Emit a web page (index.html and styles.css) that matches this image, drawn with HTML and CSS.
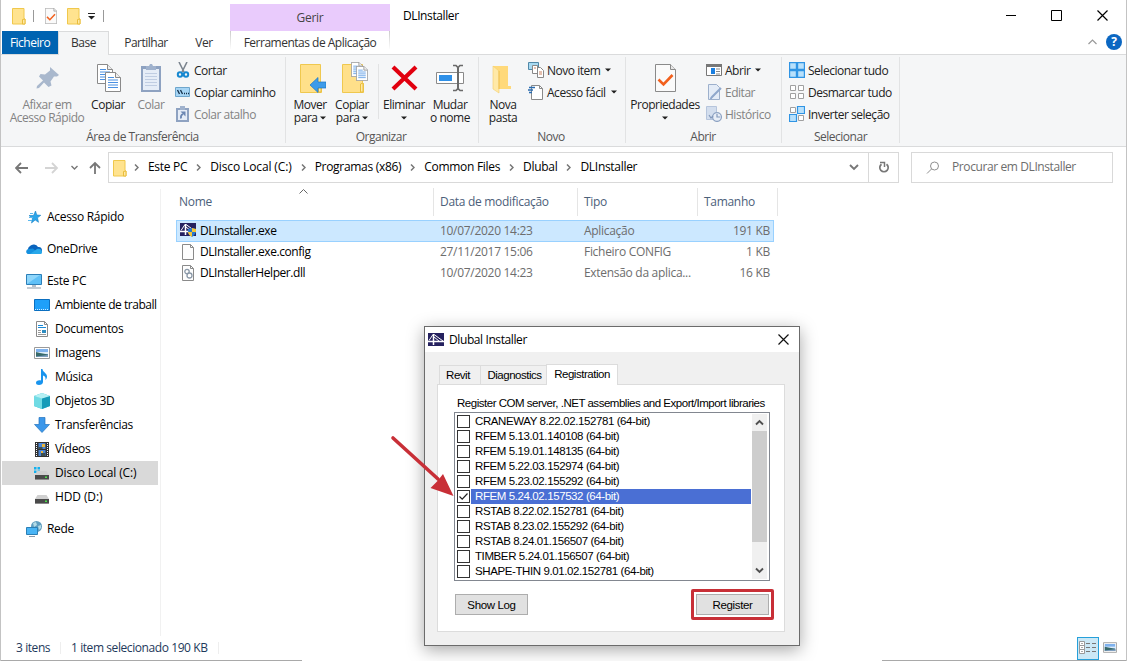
FILE: index.html
```html
<!DOCTYPE html>
<html lang="pt">

<head>
    <meta charset="UTF-8">
    <meta name="viewport" content="width=device-width, initial-scale=1.0">
    <title>DLInstaller</title>
    <link rel="stylesheet" href="styles.css">
</head>

<body>
    <!-- shared icons -->
    <svg class="defs">
        <symbol id="folder" viewBox="0 0 14 18">
            <path d="M.5 1.500h11.500v10l1 .5v5H.5z" fill="#ffe38f" stroke="#f0c84c"/>
            <path d="M10.500 17v-4.500l2.500-.5v5z" fill="#ffe9a6" stroke="#e9bd3c"/>
        </symbol>
        <symbol id="bigfolder" viewBox="0 0 22 29">
            <path d="M.5.5h20v18l1 1v9H.5z" fill="#ffe08a" stroke="#efc84f"/>
            <path d="M18.500 28V20l2.500-1v9z" fill="#ffe9a6" stroke="#e9bd3c"/>
        </symbol>
        <symbol id="page" viewBox="0 0 16 20">
            <path d="M.5.5h10l5 5v14H.5z" fill="#fff" stroke="#8a8a8a"/>
            <path d="M10.500.5v5h5" fill="#eee" stroke="#8a8a8a"/>
            <path d="M3 5.500h6M3 8h10M3 10.500h10M3 13h10M3 15.500h10" stroke="#4a90e2" stroke-width="1"/>
        </symbol>
        <symbol id="checkpage" viewBox="0 0 21 28">
            <path d="M.5.5h15l5 5v22H.5z" fill="#fafafa" stroke="#8a8a8a"/>
            <path d="M15.500.5v5h5" fill="#e6e6e6" stroke="#8a8a8a"/>
            <path d="M3.500 15.500l5 5L17.500 11" fill="none" stroke="#f2601d" stroke-width="2.600"/>
        </symbol>
        <symbol id="caret" viewBox="0 0 6 4"><path d="M0 .5h6L3 3.500z" fill="#1e1e1e"/></symbol>
        <symbol id="crumb" viewBox="0 0 5 7"><path d="M1 .5l3 3-3 3" fill="none" stroke="#777" stroke-width="1.500"/></symbol>
        <symbol id="bridge" viewBox="0 0 16 13">
            <path d="M0 0h16v13H0z" fill="#25215f"/>
            <path d="M0 8.500h16" stroke="#fff" stroke-width="1.500"/>
            <path d="M5.500 1v11" stroke="#fff" stroke-width="1.500"/>
            <path d="M5 1.500L1 7.500M6 1.500l9 6.500M6 4l5 4" fill="none" stroke="#fff"/>
        </symbol>
        <symbol id="picture" viewBox="0 0 16 12">
            <path d="M.5.5h15v11H.5z" fill="#fff" stroke="#9a9a9a"/>
            <path d="M2 2h12v8H2z" fill="#7fb2ee"/>
            <path d="M2 5h12v2H2z" fill="#dcebf8"/>
            <path d="M2 5l4 1 8 1.500V10H2z" fill="#386a6b"/>
            <path d="M2 9.500l12-1.500v2H2z" fill="#7f9fc0"/>
        </symbol>
        <symbol id="drive" viewBox="0 0 14 9">
            <path d="M2.500 0h9L14 4H0z" fill="#d0d0d0"/>
            <path d="M0 4h14v4.500H0z" fill="#4a4a4a"/>
            <path d="M0 8h14v1H0z" fill="#8b8b8b"/>
            <path d="M10 5.500h2v1.500h-2z" fill="#4be04b"/>
        </symbol>
    </svg>

    <div class="window">
        <header class="titlebar">
            <div class="quick">
                <svg class="q-folder" width="14" height="18"><use href="#folder"/></svg>
                <span class="q-sep"></span>
                <svg class="q-check" width="12" height="16"><use href="#checkpage"/></svg>
                <svg class="q-folder2" width="14" height="18"><use href="#folder"/></svg>
                <svg class="q-caret" width="7" height="7" viewBox="0 0 7 7"><path d="M0 .5h7" stroke="#222"/><path d="M0 3h7L3.500 6.500z" fill="#222"/></svg>
                <span class="q-sep"></span>
            </div>
            <div class="context">Gerir</div>
            <div class="title">DLInstaller</div>
            <svg class="controls" width="102" height="12" viewBox="0 0 102 12" fill="none" stroke="#000">
                <path d="M0 5.500h10M45.500.5h10v10h-10z"/>
                <path d="M91.500.500l10 10M101.500.500l-10 10" stroke-width="1.200"/>
            </svg>
        </header>

        <nav class="tabs">
            <div class="tab file">Ficheiro</div>
            <div class="tab active">Base</div>
            <div class="tab share">Partilhar</div>
            <div class="tab view">Ver</div>
            <div class="tab tools">Ferramentas de Aplicação</div>
            <svg class="collapse" width="9" height="6" viewBox="0 0 9 6"><path d="M.5 5l4-4 4 4" fill="none" stroke="#999" stroke-width="1.200"/></svg>
            <div class="help">?</div>
        </nav>

        <section class="ribbon">
            <div class="group clipboard">
                <div class="tools-row">
                    <div class="big pin off">
                        <svg width="32" height="32" viewBox="0 0 32 32"><path d="M19 5l9 8-2 1.500-3 0-3.500 5 1 4-3 1.500-4.500-4.500L8 26l-2.500.5.5-2.500 6-5.500-4-4 1.500-2.500 4.500.5L19 8.500z" fill="#a9b8cd"/></svg>
                        <span>Afixar em<br>Acesso Rápido</span>
                    </div>
                    <div class="big copy">
                        <svg width="32" height="32"><use href="#page" x="5" y="2" width="16" height="20"/><use href="#page" x="13" y="10" width="16" height="20"/></svg>
                        <span>Copiar</span>
                    </div>
                    <div class="big paste off">
                        <svg width="32" height="32" viewBox="0 0 32 32">
                            <path d="M6 4h20v26H6z" fill="#8ea2c1"/><path d="M8 7h16v21H8z" fill="#e6edf7"/>
                            <path d="M11 4h3l1-2h2l1 2h3v4H11z" fill="#a0b2cd"/>
                            <path d="M10 11.500h12M10 14.500h12M10 17.500h12M10 20.500h12M10 23.500h12" stroke="#c0cde2"/>
                        </svg>
                        <span>Colar</span>
                    </div>
                    <div class="small-list">
                        <div class="small">
                            <svg width="16" height="16" viewBox="0 0 16 16"><path d="M4 0l5 10M12 0L7 10" stroke="#7c858f" stroke-width="1.600"/><g fill="none" stroke="#1788d0" stroke-width="2"><circle cx="5" cy="12.500" r="2.200"/><circle cx="11" cy="12.500" r="2.200"/></g></svg>
                            Cortar
                        </div>
                        <div class="small">
                            <svg width="16" height="16" viewBox="0 0 16 16"><path d="M.5 3.500h14v9H.5z" fill="#a6d5f5" stroke="#6fa6cc"/><path d="M2.500 6l2 4M5.500 6l2 4M9 9.500h1M11 9.500h1M13 9.500h1" stroke="#14304a" stroke-width="1.300"/></svg>
                            Copiar caminho
                        </div>
                        <div class="small off">
                            <svg width="16" height="16" viewBox="0 0 16 16"><path d="M1 2h13v14H1z" fill="#8ea2c1"/><path d="M3 4h9v10H3z" fill="#e6edf7"/><path d="M5 0h5v4H5z" fill="#a0b2cd"/><path d="M6 12.500c-.5-3 .5-4 2-4.500" fill="none" stroke="#6d88b3" stroke-width="1.800"/><path d="M5.500 5.500h5v5z" fill="#6d88b3"/></svg>
                            Colar atalho
                        </div>
                    </div>
                </div>
                <div class="group-name">Área de Transferência</div>
            </div>

            <div class="group organize">
                <div class="tools-row">
                    <div class="big">
                        <svg width="32" height="32"><use href="#bigfolder" x="6" y="2" width="22" height="29"/><path d="M16 23l8-7.500v4.500h8v6h-8v4.500z" fill="#3d9be9" stroke="#1b76c4" stroke-width=".7"/></svg>
                        <span>Mover<br>para <svg class="caret"><use href="#caret"/></svg></span>
                    </div>
                    <div class="big">
                        <svg width="32" height="32"><use href="#bigfolder" x="6" y="2" width="22" height="29"/><use href="#page" x="15" y="0" width="12" height="15"/><use href="#page" x="20" y="4" width="12" height="15"/></svg>
                        <span>Copiar<br>para <svg class="caret"><use href="#caret"/></svg></span>
                    </div>
                    <div class="inner-sep"></div>
                    <div class="big delete">
                        <svg width="32" height="32" viewBox="0 0 32 32"><path d="M5 5l23 22M28 5L5 27" stroke="#e1000f" stroke-width="4.200"/></svg>
                        <span>Eliminar<br><svg class="caret"><use href="#caret"/></svg></span>
                    </div>
                    <div class="big">
                        <svg width="32" height="32" viewBox="0 0 32 32"><path d="M2.500 10.500h27v11h-27z" fill="#fff" stroke="#8a8a8a"/><path d="M5 13h13v6H5z" fill="#2e90e8"/><path d="M24 5v23" stroke="#6a6a6a" stroke-width="2"/><path d="M19 3.500h3l2 2 2-2h3M19 28.500h3l2-2 2 2h3" fill="none" stroke="#6a6a6a" stroke-width="1.700"/></svg>
                        <span>Mudar<br>o nome</span>
                    </div>
                </div>
                <div class="group-name">Organizar</div>
            </div>

            <div class="group new">
                <div class="tools-row">
                    <div class="big">
                        <svg width="32" height="32" viewBox="0 0 32 32"><path d="M6 4h15v20h3v3H11z" fill="#ffd97a"/><path d="M6 4l6 5v22l-6-4z" fill="#ffe9a8" stroke="#f3cf6a" stroke-width=".6"/><path d="M12 9v18" stroke="#efc251"/></svg>
                        <span>Nova<br>pasta</span>
                    </div>
                    <div class="small-list">
                        <div class="small">
                            <svg width="16" height="16" viewBox="0 0 16 16"><path d="M.5.5h10v7H.5z" fill="#a8daf2" stroke="#5088a8"/><path d="M4.500 3.500h5v8h-5zM9.500 5.500h3l3 3v7h-6z" fill="#fff" stroke="#888"/><path d="M11 10h3M11 12h3M6 6h2" stroke="#c9805f"/></svg>
                            Novo item <svg class="caret"><use href="#caret"/></svg>
                        </div>
                        <div class="small">
                            <svg width="16" height="16" viewBox="0 0 16 16"><path d="M3.500 1.500h8l3 3v11h-11z" fill="#fff" stroke="#8a8a8a"/><path d="M11.500 1.500v3h3" fill="none" stroke="#8a8a8a"/><path d="M1 3.500h6M0 6h5M1 8.500h3" stroke="#2b6cb0" stroke-width="1.300"/></svg>
                            Acesso fácil <svg class="caret"><use href="#caret"/></svg>
                        </div>
                    </div>
                </div>
                <div class="group-name">Novo</div>
            </div>

            <div class="group open">
                <div class="tools-row">
                    <div class="big props">
                        <svg width="32" height="32"><use href="#checkpage" x="6" y="2" width="21" height="28"/></svg>
                        <span>Propriedades<br><svg class="caret"><use href="#caret"/></svg></span>
                    </div>
                    <div class="small-list">
                        <div class="small">
                            <svg width="16" height="16" viewBox="0 0 16 16"><path d="M.5 2.500h15v11H.5z" fill="#fff" stroke="#777"/><path d="M0 2h16v3H0z" fill="#777"/><path d="M5 6h4v6H5z" fill="#1a7fe0"/><path d="M10 7h4M10 9.500h4M10 12h4" stroke="#888"/></svg>
                            Abrir <svg class="caret"><use href="#caret"/></svg>
                        </div>
                        <div class="small off">
                            <svg width="16" height="16" viewBox="0 0 16 16"><path d="M2.500.5h8l3 3v12h-11z" fill="#e4ecf7" stroke="#9db0cc"/><path d="M15 4l-9 9-1.500 2" stroke="#90a8cc" stroke-width="2"/></svg>
                            Editar
                        </div>
                        <div class="small off">
                            <svg width="16" height="16" viewBox="0 0 16 16"><path d="M.5.5h10v13H.5z" fill="#d3deee" stroke="#b6c5dc"/><circle cx="11" cy="11" r="4.400" fill="#e8eef7" stroke="#8fa4c4" stroke-width="1.300"/><path d="M11 8v3h3M3 9l2 3 2-2" fill="none" stroke="#8399bb" stroke-width="1.200"/></svg>
                            Histórico
                        </div>
                    </div>
                </div>
                <div class="group-name">Abrir</div>
            </div>

            <div class="group select">
                <div class="tools-row">
                    <div class="small-list">
                        <div class="small">
                            <svg width="16" height="16" viewBox="0 0 16 16" fill="#b8e0fb" stroke="#2f94e4"><path d="M.5.5h7v7h-7zM8.500.5h7v7h-7zM.5 8.500h7v7h-7zM8.500 8.500h7v7h-7z" stroke-width="1.400"/></svg>
                            Selecionar tudo
                        </div>
                        <div class="small">
                            <svg width="16" height="16" viewBox="0 0 16 16" fill="#fff" stroke="#a0a0a0"><path d="M1.500 1.500h5v5h-5zM9.500 1.500h5v5h-5zM1.500 9.500h5v5h-5zM9.500 9.500h5v5h-5z"/></svg>
                            Desmarcar tudo
                        </div>
                        <div class="small">
                            <svg width="16" height="16" viewBox="0 0 16 16" fill="#fff" stroke="#a0a0a0"><path d="M1.500 1.500h5v5h-5zM9.500 9.500h5v5h-5z"/><path d="M8.500.5h7v7h-7zM.5 8.500h7v7h-7z" fill="#b8e0fb" stroke="#2f94e4" stroke-width="1.200"/></svg>
                            Inverter seleção
                        </div>
                    </div>
                </div>
                <div class="group-name">Selecionar</div>
            </div>
        </section>

        <div class="address-row">
            <svg class="nav-arrows" width="88" height="14" viewBox="0 0 88 14" fill="none">
                <path d="M1 7h12M6 2L1 7l5 5" stroke="#777" stroke-width="1.800"/>
                <path d="M30 7h12M37 2l5 5-5 5" stroke="#d4d4d4" stroke-width="1.800"/>
                <path d="M56.500 5l3 3 3-3" stroke="#777" stroke-width="1.400"/>
                <path d="M80 13V2M75 7l5-5 5 5" stroke="#777" stroke-width="1.800"/>
            </svg>
            <div class="address">
                <svg class="addr-folder" width="14" height="18"><use href="#folder"/></svg>
                <svg class="sep"><use href="#crumb"/></svg><span>Este PC</span>
                <svg class="sep"><use href="#crumb"/></svg><span class="disk">Disco Local (C:)</span>
                <svg class="sep"><use href="#crumb"/></svg><span>Programas (x86)</span>
                <svg class="sep"><use href="#crumb"/></svg><span>Common Files</span>
                <svg class="sep"><use href="#crumb"/></svg><span>Dlubal</span>
                <svg class="sep"><use href="#crumb"/></svg><span>DLInstaller</span>
                <svg class="drop" width="10" height="7" viewBox="0 0 10 7"><path d="M1 1l4 4 4-4" fill="none" stroke="#777" stroke-width="1.900"/></svg>
                <div class="reload">
                    <svg width="12" height="13" viewBox="0 0 12 13"><path d="M3.500 3.200A4.200 4.200 0 1 0 8.500 3.200" fill="none" stroke="#777" stroke-width="1.700"/><path d="M2 1.500h4.500v4.500" fill="none" stroke="#777" stroke-width="1.500"/></svg>
                </div>
            </div>
            <div class="search">
                <svg width="14" height="14" viewBox="0 0 14 14" fill="none" stroke="#8f8f8f"><circle cx="8.500" cy="5" r="4"/><path d="M5.500 8L1 12.500"/></svg>
                <span>Procurar em DLInstaller</span>
            </div>
        </div>

        <main class="content">
            <aside class="sidebar">
                <div class="item">
                    <svg width="16" height="16" viewBox="0 0 16 16"><path d="M9.500 2l1.300 4 4 .3-3.300 2.500 1 4.500-3.300-2.300L5.500 14l1-4.500L3 6.500h4.500z" fill="#2aa5ea" stroke="#1780c4" stroke-width=".6"/><path d="M4 4.500h3M3 8.500h4M2 11.500h4" stroke="#5ab8ee"/></svg>
                    Acesso Rápido
                </div>
                <div class="item top">
                    <svg width="16" height="16" viewBox="0 0 16 16"><path d="M2 9a4 4 0 0 1 2-4 5 5 0 0 1 8 1 3.500 3.500 0 0 1 1 7H3a3 3 0 0 1-1-4z" fill="#0a64bd"/><path d="M2 13c-3-1-2-5 1-5l4-.5 6 5.500z" fill="#1490df"/><path d="M4 13l7-5c3-1 5 1 5 3s-1 2-2 2z" fill="#28a8ea"/></svg>
                    OneDrive
                </div>
                <div class="item top">
                    <svg width="16" height="16" viewBox="0 0 16 16"><path d="M.5 1.500h15v10H.5z" fill="#5fc0f7" stroke="#2c7fb8"/><path d="M1 11L14 2H1z" fill="#8ed6fb"/><path d="M6 12h4v2H6z" fill="#b4c0ca"/><path d="M1 15h14" stroke="#8a99a8"/></svg>
                    Este PC
                </div>
                <div class="item sub desktop">
                    <svg width="16" height="16" viewBox="0 0 16 16"><path d="M.5 2.500h15v11H.5z" fill="#1ea0fa" stroke="#0b6fc0"/><path d="M1 12.500h14" stroke="#d5ecff" stroke-dasharray="1 1"/></svg>
                    Ambiente de traball
                </div>
                <div class="item sub">
                    <svg width="16" height="16" viewBox="0 0 16 16"><path d="M2.500.5h8l3 3v12h-11z" fill="#fff" stroke="#8a8a8a"/><path d="M10.500.5v3h3" fill="none" stroke="#8a8a8a"/><path d="M4 4.500h5M4 6.500h8" stroke="#198ad8"/><path d="M4 9.500h3M4 11.500h3M4 13.500h8" stroke="#999"/><path d="M8 9h4v3H8z" fill="#2c8bc0"/></svg>
                    Documentos
                </div>
                <div class="item sub">
                    <svg width="16" height="12"><use href="#picture"/></svg>
                    Imagens
                </div>
                <div class="item sub">
                    <svg width="16" height="16" viewBox="0 0 16 16"><path d="M7 0h1.500c0 3 4.500 4 4.500 7.500 0 2-1 3-1.500 3.500.5-3-1-4-2.500-4.500V13c0 2-2 3-4 3s-3-1-3-2.300C2 12 4 11 7 11.500z" fill="#1894ee"/></svg>
                    Música
                </div>
                <div class="item sub">
                    <svg width="16" height="16" viewBox="0 0 16 16"><path d="M8 0l8 3v10l-8 3-8-3V3z" fill="#3cc0d6"/><path d="M8 5l8-2v10l-8 3z" fill="#159bb8"/><path d="M0 3l8 2v11l-8-3z" fill="#70dbe4"/><path d="M0 3l8-3 8 3-8 2.500z" fill="#b5f0f3"/></svg>
                    Objetos 3D
                </div>
                <div class="item sub">
                    <svg width="16" height="16" viewBox="0 0 16 16"><path d="M5 .5h6v7h4.500L8 15.500.5 7.500H5z" fill="#3b97ea" stroke="#2272bd" stroke-width=".7"/></svg>
                    Transferências
                </div>
                <div class="item sub">
                    <svg width="16" height="16" viewBox="0 0 16 16"><path d="M1 1h14v15H1z" fill="#333"/><path d="M2.500 2v14M13.500 2v14" stroke="#fff" stroke-dasharray="1 1"/><path d="M4.500 2h7v6h-7zM4.500 9h7v6h-7z" fill="#4b86d6"/><path d="M4.500 6h4V8h-4zM7 12h4v3H7z" fill="#3c4f52"/><path d="M8 3h3v3H8zM7 10h2v2H7z" fill="#e9b53b"/></svg>
                    Vídeos
                </div>
                <div class="item sub selected disk">
                    <svg width="16" height="16" viewBox="0 0 16 16"><path d="M0 2h2.500v2.500H0zM3.500 2H6v2.500H3.500zM0 5.500h2.500V8H0zM3.500 5.500H6V8H3.500z" fill="#12b1ef"/><use href="#drive" x="1" y="6" width="14" height="9"/></svg>
                    Disco Local (C:)
                </div>
                <div class="item sub disk">
                    <svg width="16" height="16"><use href="#drive" x="1" y="6" width="14" height="9"/></svg>
                    HDD (D:)
                </div>
                <div class="item top">
                    <svg width="16" height="16" viewBox="0 0 16 16"><circle cx="10.500" cy="5.500" r="5.500" fill="#5f9dbf"/><path d="M7 2l3-1 1 3-3 2zM12 5l3-1v3l-2 2z" fill="#b5dbe6"/><path d="M.5 6.500h11v7H.5z" fill="#48b4f5" stroke="#2b7fb5"/><path d="M3 15.500h6" stroke="#8a99a8"/></svg>
                    Rede
                </div>
            </aside>

            <section class="files">
                <div class="columns">
                    <div class="col name">Nome<svg class="sort" width="9" height="5" viewBox="0 0 9 5"><path d="M.5 4.500l4-4 4 4" fill="none" stroke="#666"/></svg></div>
                    <div class="col">Data de modificação</div>
                    <div class="col">Tipo</div>
                    <div class="col">Tamanho</div>
                </div>
                <div class="file-row chosen">
                    <div class="fname">
                        <svg width="16" height="14" viewBox="0 0 16 14"><use href="#bridge" width="16" height="13"/><path d="M8 6l4-1 4 1c0 4-1 6-4 8-3-2-4-4-4-8z" fill="#2878d0"/><path d="M12 5l4 1v3h-4zM8 9h4v5c-2-1-4-3-4-5z" fill="#f6c637"/></svg>
                        DLInstaller.exe
                    </div>
                    <div>10/07/2020 14:23</div><div>Aplicação</div><div class="size">191 KB</div>
                </div>
                <div class="file-row">
                    <div class="fname">
                        <svg width="16" height="16" viewBox="0 0 16 16"><path d="M2.500.5h8l3 3v12h-11z" fill="#fdfdfd" stroke="#8a8a8a"/><path d="M10.500.5v3h3" fill="none" stroke="#8a8a8a"/></svg>
                        DLInstaller.exe.config
                    </div>
                    <div>27/11/2017 15:06</div><div>Ficheiro CONFIG</div><div class="size">1 KB</div>
                </div>
                <div class="file-row">
                    <div class="fname">
                        <svg width="16" height="16" viewBox="0 0 16 16"><path d="M2.500.5h8l3 3v12h-11z" fill="#fdfdfd" stroke="#8a8a8a"/><path d="M10.500.5v3h3" fill="none" stroke="#8a8a8a"/><g fill="#fff" stroke="#8b99a8" stroke-width="1.300"><circle cx="7" cy="6.500" r="2.200"/><circle cx="9.500" cy="10.500" r="2.500"/></g></svg>
                        DLInstallerHelper.dll
                    </div>
                    <div>10/07/2020 14:23</div><div>Extensão da aplica...</div><div class="size">16 KB</div>
                </div>
            </section>
        </main>

        <footer class="status">
            <span class="count">3 itens</span>
            <span class="picked">1 item selecionado 190 KB</span>
            <div class="view-details">
                <svg width="18" height="14" viewBox="0 0 18 14"><path d="M.5.5h5v4h-5zM.5 4.500h5v4h-5zM.5 8.500h5v4h-5z" fill="#fff" stroke="#999"/><path d="M2.500 2.500h1M2.500 6.500h1M2.500 10.500h1" stroke="#555"/><path d="M7 2.500h4M13 2.500h4M7 6.500h4M13 6.500h4M7 10.500h4M13 10.500h4" stroke="#777"/></svg>
            </div>
            <svg class="view-icons" width="14" height="11"><use href="#picture"/></svg>
        </footer>
    </div>

    <div class="dialog">
        <div class="dialog-title">
            <svg width="16" height="13"><use href="#bridge"/></svg>
            <span>Dlubal Installer</span>
            <svg class="dialog-close" width="11" height="11" viewBox="0 0 11 11"><path d="M.5.5l10 10M10.500.5l-10 10" stroke="#111" stroke-width="1.200"/></svg>
        </div>
        <div class="dialog-tabs">
            <div class="dtab revit">Revit</div>
            <div class="dtab diag">Diagnostics</div>
            <div class="dtab reg">Registration</div>
        </div>
        <div class="panel">
            <div class="hint">Register COM server, .NET assemblies and Export/Import libraries</div>
            <div class="listbox">
                <div class="options">
                    <div class="option"><i></i><span>CRANEWAY 8.22.02.152781 (64-bit)</span></div>
                    <div class="option"><i></i><span>RFEM 5.13.01.140108 (64-bit)</span></div>
                    <div class="option"><i></i><span>RFEM 5.19.01.148135 (64-bit)</span></div>
                    <div class="option"><i></i><span>RFEM 5.22.03.152974 (64-bit)</span></div>
                    <div class="option"><i></i><span>RFEM 5.23.02.155292 (64-bit)</span></div>
                    <div class="option on"><i><svg width="11" height="11" viewBox="0 0 11 11"><path d="M1.500 5.500l2.700 2.700L9.500 2.500" fill="none" stroke="#222" stroke-width="1.200"/></svg></i><span>RFEM 5.24.02.157532 (64-bit)</span></div>
                    <div class="option"><i></i><span>RSTAB 8.22.02.152781 (64-bit)</span></div>
                    <div class="option"><i></i><span>RSTAB 8.23.02.155292 (64-bit)</span></div>
                    <div class="option"><i></i><span>RSTAB 8.24.01.156507 (64-bit)</span></div>
                    <div class="option"><i></i><span>TIMBER 5.24.01.156507 (64-bit)</span></div>
                    <div class="option"><i></i><span>SHAPE-THIN 9.01.02.152781 (64-bit)</span></div>
                </div>
                <div class="scrollbar">
                    <svg width="9" height="7" viewBox="0 0 9 7"><path d="M1 5.500L4.500 2 8 5.500" fill="none" stroke="#505050" stroke-width="1.900"/></svg>
                    <div class="thumb"></div>
                    <svg class="down" width="9" height="7" viewBox="0 0 9 7"><path d="M1 1.500L4.500 5 8 1.500" fill="none" stroke="#505050" stroke-width="1.900"/></svg>
                </div>
            </div>
            <div class="buttons">
                <div class="btn">Show Log</div>
                <div class="marked"><div class="btn">Register</div></div>
            </div>
        </div>
    </div>

    <!-- arrow pointing at the checked version -->
    <svg class="pointer" width="68" height="64" viewBox="0 0 68 64"><path d="M3 3l45 41" stroke="#c82f37" stroke-width="3.600" stroke-linecap="round"/><path d="M63.500 61L40.500 53l6.500-6.500.5-.5L53 39z" fill="#c82f37"/></svg>
</body>

</html>
```
FILE: styles.css
```css
body {
    margin: 0;
    background-color: #fff;
    font-family: "Open Sans", "Noto Sans", sans-serif;
    font-size: 12px;
    letter-spacing: -0.3px;
    color: #000;
    overflow: hidden;
}

svg {
    display: block;
    flex: none;
}

.defs {
    display: none;
}

.window {
    position: relative;
    display: flex;
    flex-direction: column;
    box-sizing: border-box;
    width: 1127px;
    height: 661px;
    border-left: 1px solid #c3c3c3;
    border-right: 1px solid #c3c3c3;
    background:
        linear-gradient(#a9a9a9, #a9a9a9) 0 100% / 301px 1px no-repeat,
        linear-gradient(#a9a9a9, #a9a9a9) 100% 100% / 244px 1px no-repeat,
        #fff;
}

/* title bar */
.titlebar {
    display: flex;
    align-items: flex-start;
    height: 31px;
}

.quick {
    display: flex;
    align-items: center;
    width: 229px;
    height: 31px;
}

.q-folder {
    margin: 0 7px 0 11px;
}

.q-sep {
    width: 1px;
    height: 12px;
    background-color: #999;
}

.q-check {
    margin: 0 10px 0 11px;
}

.q-caret {
    margin: 2px 8px 0 7px;
}

.context {
    width: 160px;
    height: 27px;
    margin-top: 4px;
    line-height: 28px;
    text-align: center;
    background-color: #e9cbfc;
    color: #444;
}

.title {
    flex: 1;
    margin-left: 13px;
    line-height: 31px;
    letter-spacing: -0.4px;
}

.controls {
    margin: 10px 18.5px 0 0;
}

/* ribbon tabs */
.tabs {
    display: flex;
    height: 24px;
    margin-bottom: -1px;
    line-height: 24px;
    position: relative;
    color: #333;
}

.tab {
    box-sizing: border-box;
    text-align: center;
    letter-spacing: -0.5px;
    white-space: nowrap;
}

.file {
    width: 56px;
    height: 23px;
    margin-left: 1px;
    background-color: #0063b1;
    color: #fff;
}

.active {
    width: 51px;
    border: 1px solid #dadbdc;
    border-bottom: none;
    line-height: 22px;
    background-color: #f5f6f7;
}

.share {
    width: 74px;
}

.view {
    width: 42px;
}

.tools {
    width: 160px;
    margin-left: 5px;
    height: 18px;
    border-left: 1px solid;
    border-right: 1px solid;
    border-image: linear-gradient(#c8c8c8, #fff) 1;
}

.collapse {
    margin: 8px 9px 0 auto;
}

.help {
    width: 16px;
    height: 16px;
    margin: 3px 4px 0 0;
    border-radius: 8px;
    background-color: #0b67c2;
    color: #fff;
    font-weight: bold;
    line-height: 16px;
    text-align: center;
}

/* ribbon */
.ribbon {
    display: flex;
    height: 91px;
    border-top: 1px solid #dadbdc;
    border-bottom: 1px solid #dadbdc;
    background-color: #f5f6f7;
    color: #222;
    letter-spacing: -0.48px;
}

.group {
    position: relative;
    display: flex;
    flex-direction: column;
    box-sizing: border-box;
    height: 86px;
    margin-top: 2px;
    border-right: 1px solid #e2e3e4;
}

.clipboard {
    width: 285px;
    padding-left: 4px;
}

.organize {
    width: 193px;
    padding-left: 3px;
}

.new {
    width: 147px;
    padding-left: 3px;
}

.open {
    width: 156px;
    padding-left: 2px;
}

.select {
    width: 118px;
    padding-left: 3px;
}

.tools-row {
    display: flex;
    height: 72px;
}

.group-name {
    height: 14px;
    margin-right: 5px;
    line-height: 16px;
    text-align: center;
    color: #555;
}

.select .group-name,
.open .group-name {
    margin-right: 3px;
}

.big {
    display: flex;
    flex-direction: column;
    align-items: center;
    width: 42px;
    padding-top: 5px;
    line-height: 13px;
    text-align: center;
    white-space: nowrap;
}

.big span {
    margin-top: 4px;
}

.pin {
    width: 84px;
}

.copy {
    width: 38px;
}

.paste {
    width: 48px;
}

.delete {
    width: 50px;
}

.props {
    width: 74px;
}

.off {
    color: #838383;
}

.caret {
    display: inline-block;
    width: 6px;
    height: 4px;
    vertical-align: 2px;
}

.inner-sep {
    width: 1px;
    height: 55px;
    margin: 7px 0 0 5px;
    background-color: #e2e3e4;
}

.small-list {
    padding-top: 2px;
}

.new .small-list,
.open .small-list,
.select .small-list {
    margin-left: 4px;
}

.small {
    display: flex;
    align-items: center;
    gap: 3px;
    height: 22px;
    white-space: nowrap;
}

.small .caret {
    margin-left: 2px;
}

/* address bar */
.address-row {
    display: flex;
    align-items: center;
    height: 41px;
    flex: none;
}

.nav-arrows {
    margin-left: 14px;
}

.address {
    display: flex;
    align-items: center;
    box-sizing: border-box;
    width: 791px;
    height: 31px;
    margin-left: 5px;
    border: 1px solid #d9d9d9;
}

.address span,
.search span {
    margin-bottom: 2px;
}

.addr-folder {
    margin: 0 7px 0 4px;
}

.disk {
    letter-spacing: -0.12px;
}

.sep {
    width: 5px;
    height: 7px;
    margin: 0 9px;
}

.addr-folder + .sep {
    margin-left: 0;
}

.drop {
    margin-left: auto;
    margin-right: 9px;
}

.reload {
    display: flex;
    align-items: center;
    justify-content: center;
    width: 29px;
    height: 29px;
    border-left: 1px solid #d9d9d9;
}

.search {
    display: flex;
    align-items: center;
    gap: 12px;
    box-sizing: border-box;
    width: 202px;
    height: 31px;
    margin-left: 12px;
    padding-left: 14px;
    border: 1px solid #d9d9d9;
    color: #6d6d6d;
    letter-spacing: -0.4px;
}

/* content */
.content {
    display: flex;
    height: 448px;
}

.sidebar {
    box-sizing: border-box;
    width: 160px;
    height: 447px;
    margin-top: 1px;
    padding-top: 16px;
    border-right: 1px solid #f1f1f1;
}

.item {
    display: flex;
    align-items: center;
    gap: 5px;
    box-sizing: border-box;
    width: 156px;
    height: 24px;
    margin-left: 1px;
    padding: 0 0 1px 24px;
    overflow: hidden;
    white-space: nowrap;
}

.top {
    margin-top: 8px;
}

.sub {
    padding-left: 32px;
}

.desktop {
    letter-spacing: -0.46px;
}

.selected {
    background-color: #d9d9d9;
}

.files {
    padding-left: 15px;
}

.columns {
    display: grid;
    grid-template-columns: 258px 144px 120px 80px;
    height: 26px;
    margin-bottom: 6px;
    line-height: 28px;
    color: #4c607a;
}

.col {
    position: relative;
    padding-left: 6px;
    border-right: 1px solid #e5e5e5;
}

.col.name {
    padding-left: 3px;
}

.sort {
    position: absolute;
    left: 123px;
    top: 1px;
}

.file-row {
    display: grid;
    grid-template-columns: 263px 144px 121px 65px;
    align-items: center;
    box-sizing: border-box;
    width: 598px;
    height: 21px;
    padding: 0 0 2px 1px;
    color: #6d6d6d;
}

.chosen {
    height: 22px;
    padding-left: 0;
    border: 1px solid #99d1ff;
    background-color: #cce8ff;
}

.fname {
    display: flex;
    align-items: center;
    gap: 4px;
    padding-left: 3px;
    color: #000;
    letter-spacing: -0.43px;
}

.size {
    text-align: right;
}

/* status bar */
.status {
    display: flex;
    align-items: center;
    height: 24px;
    color: #1e395b;
    letter-spacing: -0.42px;
}

.count {
    width: 44px;
    padding-left: 15px;
    border-right: 1px solid #eee;
    line-height: 12px;
}

.picked {
    width: 147px;
    padding-left: 10px;
    border-right: 1px solid #eee;
    line-height: 12px;
}

.view-details {
    display: flex;
    align-items: center;
    justify-content: center;
    box-sizing: border-box;
    width: 22px;
    height: 23px;
    margin-left: auto;
    border: 1px solid #26a0da;
    background-color: #cbe8f6;
}

.view-icons {
    margin: 0 9px 2px 4px;
}

/* installer dialog */
.dialog {
    position: absolute;
    left: 424px;
    top: 326px;
    box-sizing: border-box;
    width: 376px;
    height: 320px;
    border: 1px solid #6b6b6b;
    background-color: #f0f0f0;
    box-shadow: 0 4px 16px rgba(0, 0, 0, 0.35);
}

.dialog-title {
    display: flex;
    align-items: center;
    gap: 5px;
    height: 25px;
    padding-left: 3px;
    background-color: #fff;
    letter-spacing: -0.4px;
}

.dialog-title span {
    margin-bottom: 1px;
}

.dialog-close {
    margin: 0 10px 0 auto;
}

.dialog-tabs {
    display: flex;
    align-items: flex-end;
    height: 21px;
    margin: 12px 0 -1px 14px;
    position: relative;
}

.dialog-tabs,
.panel {
    font-family: "Liberation Sans", Arial, sans-serif;
    font-size: 11.5px;
    letter-spacing: -0.48px;
}

.dtab {
    box-sizing: border-box;
    height: 19px;
    margin-bottom: 1px;
    border: 1px solid #dcdcdc;
    border-bottom: none;
    line-height: 19px;
    text-align: center;
}

.revit {
    width: 42px;
    padding-right: 4px;
}

.diag {
    width: 65px;
    padding-left: 2px;
    border-left: none;
    border-right: none;
}

.reg {
    width: 72px;
    height: 21px;
    margin-bottom: 0;
    background-color: #fff;
}

.panel {
    box-sizing: border-box;
    width: 348px;
    height: 248px;
    margin-left: 12px;
    padding: 10px 14px 0 16px;
    border: 1px solid #dcdcdc;
    background-color: #fff;
}

.hint {
    height: 17px;
    padding-left: 3px;
    line-height: 16px;
    white-space: nowrap;
}

.listbox {
    display: flex;
    box-sizing: border-box;
    width: 316px;
    height: 169px;
    border: 1px solid #828790;
    padding: 1px;
    letter-spacing: -0.4px;
}

.options {
    width: 296px;
    overflow: hidden;
}

.option {
    display: flex;
    align-items: center;
    height: 15px;
    padding-left: 1px;
    white-space: nowrap;
}

.option i {
    box-sizing: border-box;
    flex: none;
    width: 13px;
    height: 13px;
    border: 1px solid #333;
    background-color: #fff;
}

.option span {
    flex: 1;
    margin: 0 1px;
    padding-left: 4px;
    line-height: 15px;
}

.option.on span {
    background-color: #4a6fd4;
    color: #fff;
}

.scrollbar {
    display: flex;
    flex-direction: column;
    align-items: center;
    width: 15px;
    height: 165px;
    background-color: #f0f0f0;
}

.scrollbar svg {
    margin: 5px 0;
}

.thumb {
    width: 15px;
    height: 111px;
    background-color: #cdcdcd;
}

.scrollbar .down {
    margin: auto 0 5px;
}

.buttons {
    display: flex;
    justify-content: space-between;
    align-items: center;
    margin: 8px -4px 0 1px;
    letter-spacing: -0.35px;
}

.btn {
    box-sizing: border-box;
    width: 73px;
    height: 21px;
    border: 1px solid #adadad;
    background-color: #e1e1e1;
    line-height: 20px;
    text-align: center;
}

.marked {
    padding: 2px;
    border: 3px solid #c82f37;
    border-radius: 2px;
}

.pointer {
    position: absolute;
    left: 390px;
    top: 435px;
}
```
